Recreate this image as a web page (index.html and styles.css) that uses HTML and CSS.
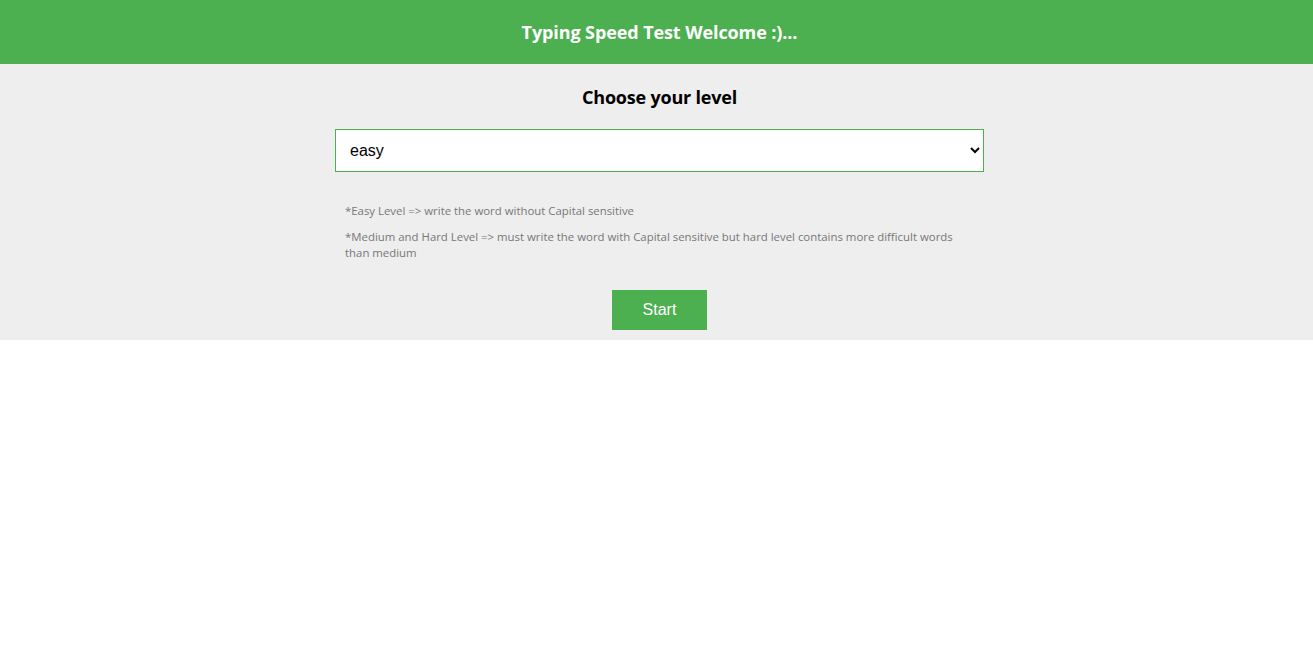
FILE: index.html
```html
<!DOCTYPE html>
<html lang="en">
<head>
<meta charset="utf-8">
<title>Typing Speed Test</title>
<link rel="stylesheet" href="styles.css">
</head>
<body>
<header class="top-bar">
  <h1 class="top-title">Typing Speed Test Welcome :)...</h1>
</header>
<section class="level-panel">
  <div class="level-inner">
    <h2 class="level-title">Choose your level</h2>
    <select class="level-select">
      <option>easy</option>
      <option>medium</option>
      <option>hard</option>
    </select>
    <div class="notes">
      <p class="note">*Easy Level =&gt; write the word without Capital sensitive</p>
      <p class="note">*Medium and Hard Level =&gt; must write the word with Capital sensitive but hard level contains more difficult words than medium</p>
    </div>
    <button class="start-btn">Start</button>
  </div>
</section>
</body>
</html>
```

FILE: styles.css
```css
* { box-sizing: border-box; }
html, body { margin: 0; padding: 0; background: #fff; }
body { font-family: "Open Sans", "Noto Sans", sans-serif; }

.top-bar {
  background: #4caf50;
  height: 64px;
  display: flex;
  align-items: center;
  justify-content: center;
  padding-left: 6px;
}
.top-title {
  margin: 0;
  color: #fff;
  font-size: 18px;
  font-weight: 700;
  letter-spacing: -0.1px;
}

.level-panel {
  background: #eeeeee;
  padding: 16px 0 10px 6px;
}
.level-inner {
  width: 649px;
  margin: 0 auto;
  display: flex;
  flex-direction: column;
  align-items: center;
}
.level-title {
  margin: 0;
  font-size: 18px;
  font-weight: 700;
  color: #000;
  line-height: 34px;
  letter-spacing: -0.2px;
}
.level-select {
  margin-top: 15px;
  width: 649px;
  height: 43px;
  border: 1px solid #4caf50;
  border-radius: 0;
  background: #fff;
  font-family: "Liberation Sans", Arial, sans-serif;
  font-size: 16px;
  color: #000;
  padding: 0 10px;
}
.notes {
  align-self: stretch;
  padding: 0 10px;
  margin-top: 31px;
}
.note {
  margin: 0 0 10px 0;
  font-size: 11.4px;
  line-height: 16px;
  color: #777;
}
.start-btn {
  margin-top: 19px;
  width: 95px;
  height: 40px;
  background: #4caf50;
  color: #fff;
  border: none;
  font-family: "Liberation Sans", Arial, sans-serif;
  font-size: 16px;
  cursor: pointer;
}
```
